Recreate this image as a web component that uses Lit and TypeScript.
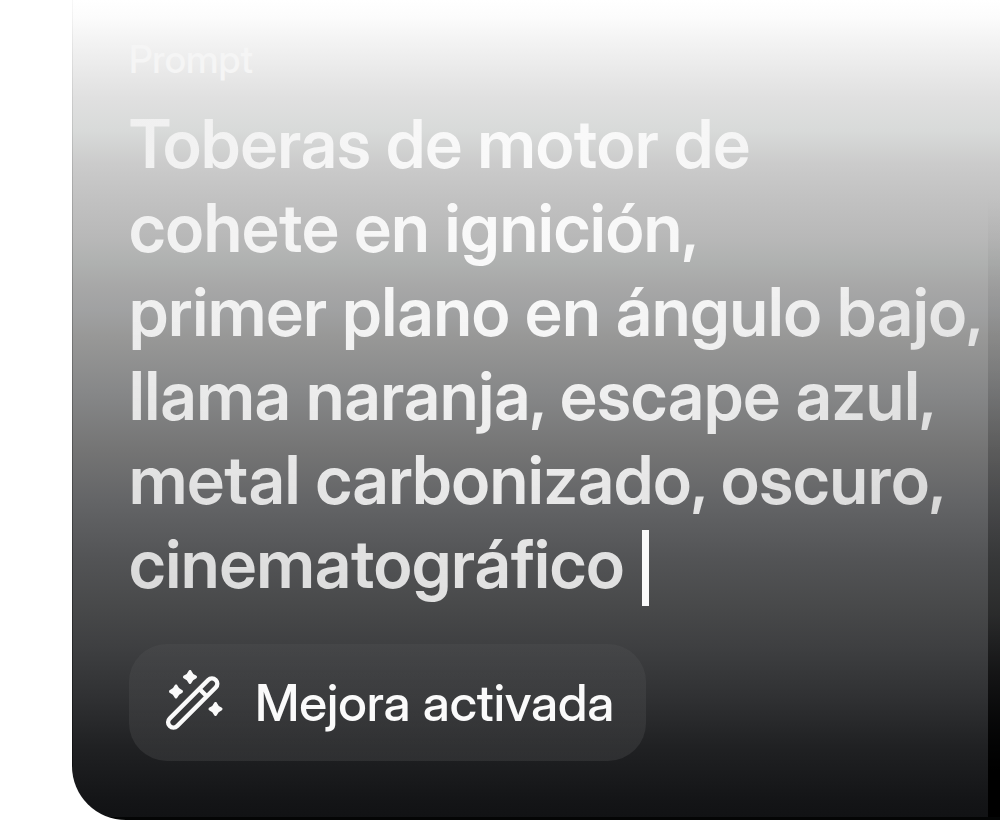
import { LitElement, html, css } from "lit";
import { customElement, state } from "lit/decorators.js";

@customElement("app-root")
export class AppRoot extends LitElement {
  static styles = css`
    :host {
      display: block;
      padding-left: 72px;
      background: #fff;
      font-family: "Inter Display", Inter, "Liberation Sans", sans-serif;
    }
    .card {
      box-sizing: border-box;
      min-height: 100vh;
      padding: 35px 12px 59px 57px;
      display: flex;
      flex-direction: column;
      align-items: flex-start;
      border-bottom-left-radius: 54px;
      background:
        linear-gradient(#040505, #040505) bottom / 100% 3px no-repeat,
        linear-gradient(transparent 24%, rgba(0, 0, 0, 0.12) 45%, rgba(0, 0, 0, 0.4) 75%, #000 94%) right / 12px 100% no-repeat,
        linear-gradient(rgba(0, 0, 0, 0.03), rgba(0, 0, 0, 0.5)) left / 1px 100% no-repeat,
        linear-gradient(
          #fff 0%, #fcfcfc 2%, #f3f3f3 5%, #ebebeb 8%, #e0e0e0 12%, #d8dad9 16%,
          #cbcbcb 20%, #c2c2c2 24%, #b8b8b8 29%, #afb1b0 32%, #a7a7a7 35%, #a0a1a2 38%,
          #989897 41%, #868788 48%, #747474 55%, #646567 61%, #535456 68%,
          #48494a 74%, #3e3f41 79%, #303133 85%, #202123 91%, #131416 98%, #111214 100%
        );
    }
    .label {
      font-size: 38px;
      line-height: 48px;
      font-weight: 500;
      color: #f5f5f5;
    }
    .field {
      position: relative;
      align-self: stretch;
      margin-top: 19px;
    }
    .prompt {
      display: block;
      box-sizing: border-box;
      width: 100%;
      padding: 0;
      border: 0;
      outline: 0;
      resize: none;
      overflow: hidden;
      white-space: pre;
      font: inherit;
      font-size: 67px;
      line-height: 84px;
      font-weight: 600;
      color: transparent;
      caret-color: transparent;
      background:
        linear-gradient(rgba(0, 0, 0, 0) 35%, rgba(0, 0, 0, 0.1)),
        linear-gradient(95deg, #f0f0f0, #fafafa 45%, #f6f6f6 65%, #e6e6e6);
      background-clip: text;
      -webkit-background-clip: text;
    }
    .caret {
      position: absolute;
      left: 513px;
      bottom: 0;
      width: 7px;
      height: 76px;
      background: #fafafa;
      pointer-events: none;
    }
    .enhance {
      display: flex;
      align-items: center;
      gap: 32px;
      height: 117px;
      margin-top: 38px;
      padding: 0 32px 0 36px;
      border: 0;
      border-radius: 38px;
      background: linear-gradient(rgba(255, 255, 255, 0.03), rgba(255, 255, 255, 0.08));
      color: #fafafa;
      font: inherit;
      font-size: 51px;
      line-height: 64px;
      font-weight: 500;
      white-space: nowrap;
      cursor: pointer;
    }
    .wand {
      flex: none;
      width: 58px;
      height: 60px;
      overflow: visible;
    }
  `;

  @state() private enhanced = true;

  private text = [
    "Toberas de motor de",
    "cohete en ignición,",
    "primer plano en ángulo bajo,",
    "llama naranja, escape azul,",
    "metal carbonizado, oscuro,",
    "cinematográfico",
  ].join("\n");

  render() {
    return html`
      <main class="card">
        <label class="label" for="prompt">Prompt</label>
        <div class="field">
          <textarea class="prompt" id="prompt" rows="6" spellcheck="false" .value=${this.text}></textarea>
          <span class="caret"></span>
        </div>
        <button
          class="enhance"
          type="button"
          aria-pressed=${this.enhanced ? "true" : "false"}
          @click=${() => (this.enhanced = !this.enhanced)}
        >
          <svg class="wand" viewBox="0 0 58 60" fill="none" aria-hidden="true">
            <g stroke="currentColor" stroke-width="4.500">
              <rect x="-32.500" y="-5.300" width="65" height="10.600" rx="5.300" transform="translate(27.700 30) rotate(-45)" />
              <path d="M34.500 16L42 23.500" />
            </g>
            <g fill="currentColor" stroke="currentColor" stroke-width="3" stroke-linejoin="round">
              <path d="M25 -1.500Q26.500 2.500 30.500 4Q26.500 5.500 25 9.500Q23.500 5.500 19.500 4Q23.500 2.500 25 -1.500Z" />
              <path d="M11 13Q12.500 17 16.500 18.500Q12.500 20 11 24Q9.500 20 5.500 18.500Q9.500 17 11 13Z" />
              <path d="M50.500 30.500Q52 34.500 56 36Q52 37.500 50.500 41.500Q49 37.500 45 36Q49 34.500 50.500 30.500Z" />
            </g>
          </svg>
          <span>Mejora activada</span>
        </button>
      </main>
    `;
  }
}
